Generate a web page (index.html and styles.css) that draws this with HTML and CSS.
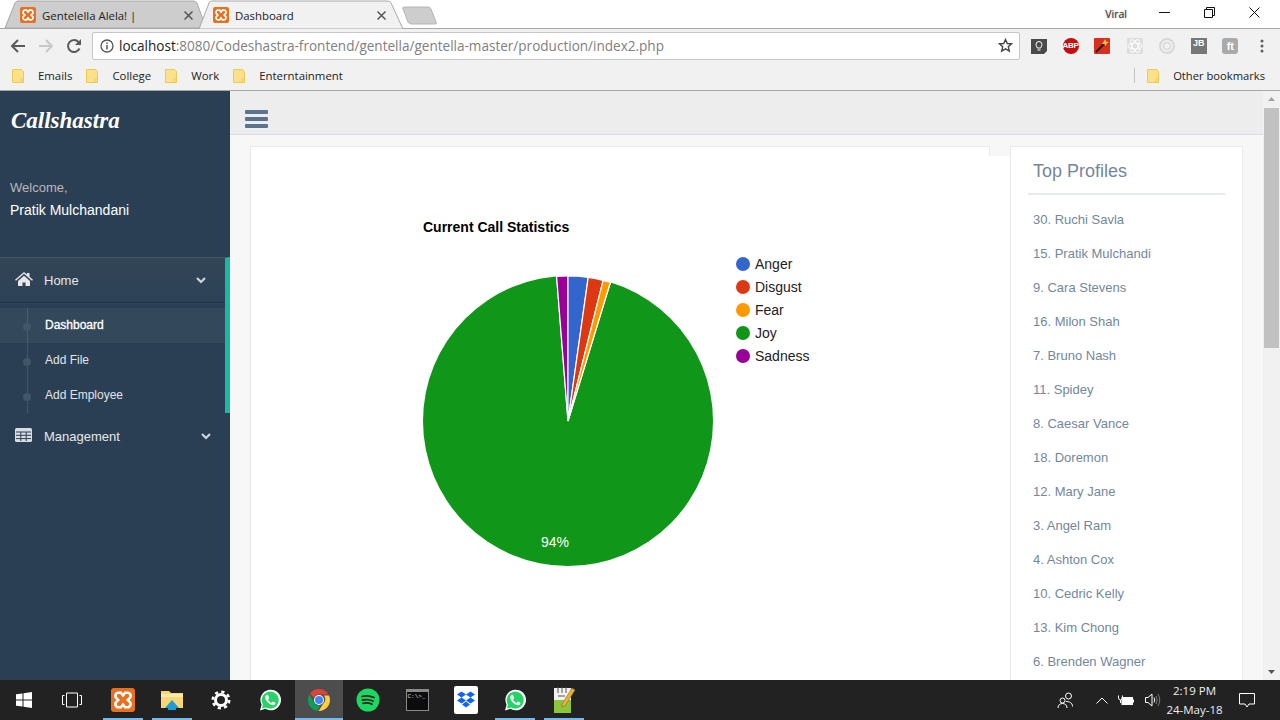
FILE: index.html
```html
<!DOCTYPE html>
<html lang="en">
<head>
    <meta charset="UTF-8">
    <title>Dashboard</title>
    <link rel="stylesheet" href="styles.css">
</head>
<body>
    <svg class="defs" width="0" height="0">
        <symbol id="xampp" viewBox="0 0 16 16">
            <rect width="16" height="16" rx="2" fill="#e8701f"/>
            <path d="M5 3.2h1.6L8 5l1.4-1.8H11a2.1 2.1 0 0 1 1.2 3.8L11.2 8l1 1a2.1 2.1 0 0 1-1.2 3.8H9.4L8 11l-1.4 1.8H5A2.1 2.1 0 0 1 3.8 9l1-1-1-1A2.1 2.1 0 0 1 5 3.2z" fill="none" stroke="#fff" stroke-width="1.7"/>
        </symbol>
        <symbol id="folder" viewBox="0 0 12 14">
            <path d="M.5.5h9l2 2v11H.5z" fill="#fde08a" stroke="#f0c94f"/>
            <rect x="9" y="10" width="2.5" height="3" fill="none" stroke="#f0c94f" stroke-width=".8"/>
        </symbol>
        <symbol id="whatsapp" viewBox="0 0 24 24">
            <path d="M2 22.500l1.600-5.700A10.300 10.300 0 1 1 7.400 20.800z" fill="#fff"/>
            <path d="M4 20.500l1-3.900A8.500 8.500 0 1 1 8 19.500z" fill="#25d366"/>
            <path d="M9 6.800c-.5 0-1.700 1-1.700 2.700 0 3 3.700 7.200 7.400 7.700 1.500.2 2.700-1 2.700-2 0-.5-2-1.600-2.500-1.600-.4 0-.8 1.100-1.300 1.100-1 0-3.400-2.300-3.400-3.300 0-.5.900-.9.900-1.400 0-.4-1-3.200-1.600-3.200z" fill="#fff"/>
        </symbol>
    </svg>

    <div class="window">
        <div class="tabstrip">
            <svg class="tab-shapes" width="440" height="29" viewBox="0 0 440 29">
                <path d="M5 28 15 3q1-2 3-2h175q3 0 4 2l9 25z" fill="#cdcdcd" stroke="#a8a8a8"/>
                <path d="M199 29 209 3q1-2 3-2h175q3 0 4 2l12 26z" fill="#f1f1f1" stroke="#a8a8a8"/>
                <path d="M403 9q-1-2 1-2h24q2 0 3 2l5 13q1 2-1 2h-24q-2 0-3-2z" fill="#cdcdcd" stroke="#b5b5b5"/>
            </svg>
            <div class="tab">
                <svg class="tab-icon" width="16" height="16"><use href="#xampp"/></svg>
                <span class="tab-title">Gentelella Alela! |</span>
                <svg class="tab-close" width="9" height="9" viewBox="0 0 9 9"><path d="M.5.5l8 8M8.500.5l-8 8" stroke="#555" stroke-width="1.500"/></svg>
            </div>
            <div class="tab">
                <svg class="tab-icon" width="16" height="16"><use href="#xampp"/></svg>
                <span class="tab-title">Dashboard</span>
                <svg class="tab-close" width="9" height="9" viewBox="0 0 9 9"><path d="M.5.5l8 8M8.500.5l-8 8" stroke="#555" stroke-width="1.500"/></svg>
            </div>
            <span class="user-name">Viral</span>
            <div class="win-buttons">
                <svg width="11" height="11" viewBox="0 0 11 11"><path d="M0 5.500h11" stroke="#111"/></svg>
                <svg width="11" height="11" viewBox="0 0 11 11"><path d="M.5 2.500h8v8h-8zM2.500 2.500v-2h8v8h-2" fill="none" stroke="#111"/></svg>
                <svg width="11" height="11" viewBox="0 0 11 11"><path d="M.5.500l10 10M10.500.500l-10 10" stroke="#111"/></svg>
            </div>
        </div>

        <div class="toolbar">
            <svg class="nav-icon" width="16" height="16" viewBox="0 0 16 16"><path d="M15 8H2M8 2 2 8l6 6" fill="none" stroke="#5a5a5a" stroke-width="2"/></svg>
            <svg class="nav-icon" width="16" height="16" viewBox="0 0 16 16"><path d="M1 8h13M8 2l6 6-6 6" fill="none" stroke="#c8c8c8" stroke-width="2"/></svg>
            <svg class="nav-icon" width="16" height="16" viewBox="0 0 16 16"><path d="M13.500 10.500A6 6 0 1 1 12.500 4" fill="none" stroke="#5a5a5a" stroke-width="2"/><path d="M15 1v6H9z" fill="#5a5a5a"/></svg>
            <div class="omnibox">
                <svg width="14" height="14" viewBox="0 0 14 14"><circle cx="7" cy="7" r="6" fill="none" stroke="#555" stroke-width="1.300"/><path d="M7 6v4.500M7 3.500v1.500" stroke="#555" stroke-width="1.500"/></svg>
                <span class="url"><span class="url-host">localhost</span>:8080/Codeshastra-frontend/gentella/gentella-master/production/index2.php</span>
                <svg class="star" width="15" height="15" viewBox="0 0 15 15"><path d="M7.500 1.500l1.800 4 4.300.4-3.300 2.900 1 4.300-3.800-2.300-3.800 2.300 1-4.300L1.400 5.900l4.300-.4z" fill="none" stroke="#444" stroke-width="1.400"/></svg>
            </div>
            <div class="extensions">
                <svg width="16" height="16" viewBox="0 0 16 16"><path d="M0 1h16v12l-3 3H0z" fill="#4a4a4a"/><path d="M5 6.500a3 3 0 1 1 6 0c0 1.500-1 2-1.300 3.500H6.300C6 8.500 5 8 5 6.500zM6.500 12h3" fill="none" stroke="#fff"/></svg>
                <span class="ext-abp">ABP</span>
                <svg width="16" height="16" viewBox="0 0 16 16"><rect width="16" height="16" rx="1" fill="#d8301f"/><path d="M2 14l8-8" stroke="#222" stroke-width="2"/><path d="M11 1l1 2.500L15 4l-2.500 1.500L12 8l-1.500-2L8 6l1.500-2z" fill="#f8c53a"/></svg>
                <svg width="18" height="16" viewBox="0 0 18 16"><rect x="1" width="16" height="16" rx="1" fill="#dedede"/><g fill="none" stroke="#fff"><ellipse cx="9" cy="8" rx="7" ry="3"/><ellipse cx="9" cy="8" rx="7" ry="3" transform="rotate(60 9 8)"/><ellipse cx="9" cy="8" rx="7" ry="3" transform="rotate(120 9 8)"/></g></svg>
                <svg width="16" height="16" viewBox="0 0 16 16"><circle cx="8" cy="8" r="7" fill="none" stroke="#d8d8d8" stroke-width="2"/><circle cx="8" cy="8" r="3.500" fill="none" stroke="#d8d8d8" stroke-width="1.500"/></svg>
                <span class="ext-jb">JB</span>
                <span class="ext-ft">ft</span>
                <svg width="16" height="16" viewBox="0 0 16 16"><g fill="#5f5f5f"><rect x="6.500" y="1.500" width="3" height="3" rx="1.500"/><rect x="6.500" y="6.500" width="3" height="3" rx="1.500"/><rect x="6.500" y="11.500" width="3" height="3" rx="1.500"/></g></svg>
            </div>
        </div>

        <div class="bookmarks">
            <div class="bookmark"><svg width="12" height="14"><use href="#folder"/></svg>Emails</div>
            <div class="bookmark"><svg width="12" height="14"><use href="#folder"/></svg>College</div>
            <div class="bookmark"><svg width="12" height="14"><use href="#folder"/></svg>Work</div>
            <div class="bookmark"><svg width="12" height="14"><use href="#folder"/></svg>Enterntainment</div>
            <div class="bookmark bookmark-other"><svg width="12" height="14"><use href="#folder"/></svg>Other bookmarks</div>
        </div>

        <div class="page">
            <aside class="sidebar">
                <div class="logo">Callshastra</div>
                <div class="profile">
                    <span class="welcome">Welcome,</span>
                    <h2 class="profile-name">Pratik Mulchandani</h2>
                </div>
                <div class="menu-group">
                    <div class="menu-item menu-active">
                        <svg class="menu-icon" width="18" height="14" viewBox="0 0 18 14"><path d="M9 0l3 2.600V1h2.500v3.800L18 7.800l-1 1-8-7-8 7-1-1z" fill="#e7e7e7"/><path d="M3 9l6-5.200L15 9v5h-4.500v-3.500h-3V14H3z" fill="#e7e7e7"/></svg>
                        <span>Home</span>
                        <svg class="chevron" width="10" height="7" viewBox="0 0 10 7"><path d="M1 1l4 4 4-4" fill="none" stroke="#d0d5da" stroke-width="2.200"/></svg>
                    </div>
                    <ul class="submenu">
                        <li class="current">Dashboard</li>
                        <li>Add File</li>
                        <li>Add Employee</li>
                    </ul>
                </div>
                <div class="menu-item menu-plain">
                    <svg class="menu-icon" width="18" height="14" viewBox="0 0 18 14"><rect y="0" width="17" height="14" rx="1.500" fill="#d9dde1"/><path d="M1 4h15M1 7.300h15M1 10.600h15M5.800 4v9M11.200 4v9" stroke="#2a3f54" stroke-width="1"/></svg>
                    <span>Management</span>
                    <svg class="chevron" width="10" height="7" viewBox="0 0 10 7"><path d="M1 1l4 4 4-4" fill="none" stroke="#d0d5da" stroke-width="2.200"/></svg>
                </div>
            </aside>

            <div class="content">
                <div class="topnav">
                    <div class="hamburger"><i></i><i></i><i></i></div>
                </div>
                <div class="main">
                    <div class="chart-wrap">
                        <div class="chart-cap"></div>
                        <div class="chart-body">
                            <svg width="759" height="524" viewBox="251 156 759 524">
                                <text x="423" y="232" class="chart-title">Current Call Statistics</text>
                                <circle cx="568" cy="421" r="145" fill="#109618"/>
                                <g stroke="#fff" stroke-width="1.200">
                                    <path d="M568 421 610.400 282.300A145 145 0 0 0 556.600 276.400z" fill="#109618"/>
                                    <path d="M568 421 568 276A145 145 0 0 0 556.600 276.400z" fill="#990099"/>
                                    <path d="M568 421 568 276A145 145 0 0 1 588.200 277.400z" fill="#3366cc"/>
                                    <path d="M568 421 588.200 277.400A145 145 0 0 1 603.100 280.300z" fill="#dc3912"/>
                                    <path d="M568 421 603.100 280.300A145 145 0 0 1 610.400 282.300z" fill="#ff9900"/>
                                </g>
                                <text x="541" y="547" class="slice-label">94%</text>
                                <g class="legend">
                                    <circle cx="743" cy="264" r="7" fill="#3366cc"/><text x="755" y="269">Anger</text>
                                    <circle cx="743" cy="287" r="7" fill="#dc3912"/><text x="755" y="292">Disgust</text>
                                    <circle cx="743" cy="310" r="7" fill="#ff9900"/><text x="755" y="315">Fear</text>
                                    <circle cx="743" cy="333" r="7" fill="#109618"/><text x="755" y="338">Joy</text>
                                    <circle cx="743" cy="356" r="7" fill="#990099"/><text x="755" y="361">Sadness</text>
                                </g>
                            </svg>
                        </div>
                    </div>
                    <div class="profiles">
                        <h2>Top Profiles</h2>
                        <ul>
                            <li>30. Ruchi Savla</li>
                            <li>15. Pratik Mulchandi</li>
                            <li>9. Cara Stevens</li>
                            <li>16. Milon Shah</li>
                            <li>7. Bruno Nash</li>
                            <li>11. Spidey</li>
                            <li>8. Caesar Vance</li>
                            <li>18. Doremon</li>
                            <li>12. Mary Jane</li>
                            <li>3. Angel Ram</li>
                            <li>4. Ashton Cox</li>
                            <li>10. Cedric Kelly</li>
                            <li>13. Kim Chong</li>
                            <li>6. Brenden Wagner</li>
                        </ul>
                    </div>
                </div>
            </div>

            <div class="scrollbar">
                <svg width="17" height="17" viewBox="0 0 17 17"><path d="M5 10l3.500-4 3.500 4z" fill="#a3a3a3"/></svg>
                <div class="scroll-thumb"></div>
                <div class="scroll-track"></div>
                <svg width="17" height="17" viewBox="0 0 17 17"><path d="M5 7l3.500 4L12 7z" fill="#555"/></svg>
            </div>
        </div>

        <div class="taskbar">
            <div class="task-btn">
                <svg width="16" height="16" viewBox="0 0 16 16"><path d="M0 2.300 6.500 1.400V7.500H0zM7.500 1.300 16 0V7.500H7.500zM0 8.500H6.500V14.600L0 13.700zM7.500 8.500H16V16L7.500 14.700z" fill="#fff"/></svg>
            </div>
            <div class="task-btn">
                <svg width="20" height="16" viewBox="0 0 20 16"><path d="M4.500 1h11v14h-11zM2.500 3.500H.5v9h2M17.500 3.500h2v9h-2" fill="none" stroke="#fff"/></svg>
            </div>
            <div class="task-item open"><svg width="24" height="28"><use href="#xampp"/></svg></div>
            <div class="task-item open">
                <svg width="22" height="20" viewBox="0 0 22 20"><path d="M0 1h8l2 2h12v15H0z" fill="#f7d774"/><path d="M0 4h22v3H0z" fill="#fbe9a8"/><path d="M4 18 11 10l7 8h-3v2H7v-2z" fill="#1f9bd8"/></svg>
            </div>
            <div class="task-item">
                <svg width="20" height="20" viewBox="0 0 20 20"><circle cx="10" cy="10" r="5.500" fill="none" stroke="#fff" stroke-width="3"/><circle cx="10" cy="10" r="8.200" fill="none" stroke="#fff" stroke-width="2.600" stroke-dasharray="3.200 3.240"/></svg>
            </div>
            <div class="task-item"><svg width="24" height="24"><use href="#whatsapp"/></svg></div>
            <div class="task-item open active">
                <svg width="24" height="24" viewBox="0 0 24 24">
                    <path d="M12 1a11 11 0 0 1 9.500 5.500H12a5.500 5.500 0 0 0-5.200 3.600L3.200 5.400A11 11 0 0 1 12 1z" fill="#db4437"/>
                    <path d="M22 7.500A11 11 0 0 1 11.500 23l4.800-7.500A5.500 5.500 0 0 0 16.800 7.500z" fill="#ffcd40"/>
                    <path d="M2.500 6.500l4.700 8a5.500 5.500 0 0 0 6 2.800L10.500 23A11 11 0 0 1 2.500 6.500z" fill="#0f9d58"/>
                    <circle cx="12" cy="12" r="5" fill="#fff"/><circle cx="12" cy="12" r="4" fill="#4285f4"/>
                </svg>
            </div>
            <div class="task-item">
                <svg width="24" height="24" viewBox="0 0 24 24"><circle cx="12" cy="12" r="11.500" fill="#1ed760"/><path d="M6 8.500q6-1.800 12 1M6.500 12q5.500-1.300 10.500 1M7 15.300q4.500-1 9 .8" fill="none" stroke="#1a2a1f" stroke-width="1.800" stroke-linecap="round"/></svg>
            </div>
            <div class="task-item">
                <div class="cmd-icon">C:\&gt;_</div>
            </div>
            <div class="task-item">
                <svg width="24" height="28" viewBox="0 0 24 28"><rect width="24" height="28" rx="2" fill="#fff"/><path d="M7.500 5.500 12 8.500 7.500 11.500 3 8.500zM16.500 5.500 21 8.500 16.500 11.500 12 8.500zM7.500 11.500 12 14.500 7.500 17.500 3 14.500zM16.500 11.500 21 14.500 16.500 17.500 12 14.500zM12 15.500 16 18.500 12 21.500 8 18.500z" fill="#0f62fe"/></svg>
            </div>
            <div class="task-item open"><svg width="24" height="24"><use href="#whatsapp"/></svg></div>
            <div class="task-item open">
                <svg width="24" height="28" viewBox="0 0 24 28"><path d="M2 2h17v25H2z" fill="#f2f2f2"/><path d="M2 14h17v13H2z" fill="#8cc63f"/><path d="M6 1v6M10 1v6M14 1v6" stroke="#555"/><path d="M6 10h7" stroke="#555"/><path d="M10 18 20 2l3 2-10 16-3 1z" fill="#e8b23a" stroke="#8a6a1e" stroke-width=".6"/></svg>
            </div>
            <div class="tray">
                <svg width="18" height="18" viewBox="0 0 18 18"><circle cx="11.500" cy="5" r="3" fill="none" stroke="#fff"/><circle cx="5.500" cy="9.500" r="2.500" fill="none" stroke="#fff"/><path d="M1 17c0-3 2-4.500 4.500-4.500S10 14 10 17M9 10.500c3 0 6.500 1 6.500 5" fill="none" stroke="#fff"/></svg>
                <svg class="tray-caret" width="12" height="7" viewBox="0 0 12 7"><path d="M.5 6.500 6 1l5.500 5.500" fill="none" stroke="#fff"/></svg>
                <svg class="tray-battery" width="16" height="12" viewBox="0 0 16 12"><path d="M.5 1.500V4a2 2 0 0 0 4 0V1.500M2.500 6v3" fill="none" stroke="#fff"/><rect x="4" y="3.500" width="10.500" height="7" fill="#fff" stroke="#fff"/><path d="M15.500 5.500v3" stroke="#fff"/></svg>
                <svg class="tray-volume" width="16" height="14" viewBox="0 0 16 14"><path d="M.5 4.500h2.500L7 1v12L3 9.500H.5z" fill="none" stroke="#fff"/><path d="M9 4.500q1.500 2.500 0 5" fill="none" stroke="#fff"/><path d="M11 3q2.500 4 0 8M13 1q3.500 6 0 12" fill="none" stroke="#777"/></svg>
                <div class="clock"><span>2:19 PM</span><span>24-May-18</span></div>
                <svg class="tray-note" width="16" height="15" viewBox="0 0 16 15"><path d="M.5.500h15v10.500h-5.500l-2 3-2-3H.5z" fill="none" stroke="#fff"/></svg>
            </div>
        </div>
    </div>
</body>
</html>
```

FILE: styles.css
```css
* {
    box-sizing: border-box;
}
body {
    margin: 0;
    overflow: hidden;
    font-family: "Liberation Sans", Arial, sans-serif;
    color: #222;
}
ul {
    list-style: none;
    margin: 0;
    padding: 0;
}
.defs {
    display: block;
    height: 0;
}
.window {
    height: 720px;
    display: flex;
    flex-direction: column;
}

/* browser chrome */
.tabstrip {
    height: 28px;
    background: #fff;
    position: relative;
    display: flex;
    padding-left: 20px;
    font-family: "Open Sans", sans-serif;
    font-size: 11.400px;
}
.tab-shapes {
    position: absolute;
    top: 0;
    left: 0;
}
.tab {
    position: relative;
    width: 193px;
    height: 28px;
    display: flex;
    align-items: center;
    padding-right: 20px;
    padding-top: 2px;
}
.tab-title {
    flex: 1;
    margin-left: 6px;
}
.user-name {
    margin-left: auto;
    margin-right: 14px;
    line-height: 28px;
    font-size: 10.500px;
    color: #333;
    text-shadow: 0 0 2px #999;
}
.win-buttons {
    width: 139px;
    display: flex;
    align-items: center;
    justify-content: space-between;
    padding: 0 20px 3px 18px;
}
.toolbar {
    height: 34px;
    background: #f1f1f1;
    display: flex;
    align-items: center;
    padding-left: 10px;
    border-top: 1px solid #a8a8a8;
    font-family: "Open Sans", sans-serif;
}
.nav-icon {
    margin-right: 12px;
}
.nav-icon:nth-child(3) {
    margin-right: 10px;
}
.omnibox {
    width: 928px;
    height: 28px;
    background: #fff;
    border: 1px solid #c6c6c6;
    border-radius: 2px;
    display: flex;
    align-items: center;
    padding-left: 7px;
    padding-right: 6px;
}
.url {
    margin-left: 5px;
    font-size: 13.550px;
    color: #808080;
    flex: 1;
}
.url-host {
    color: #222;
}
.extensions {
    flex: 1;
    display: flex;
    align-items: center;
    justify-content: space-between;
    padding: 0 10px 0 11px;
}
.extensions > span {
    width: 16px;
    height: 16px;
    color: #fff;
    display: flex;
    align-items: center;
    justify-content: center;
    font-family: "Liberation Sans", sans-serif;
    font-weight: bold;
}
.ext-abp {
    background: #c70d0d;
    border-radius: 50%;
    font-size: 8px;
    letter-spacing: -0.3px;
}
.ext-jb {
    background: #777;
    font-size: 9px;
    align-items: flex-start !important;
}
.ext-ft {
    background: #aaa;
    border-radius: 3px;
    font-size: 11px;
}
.bookmarks {
    height: 29px;
    background: #f1f1f1;
    border-bottom: 1px solid #a8a8a8;
    display: flex;
    align-items: center;
    padding: 0 0 1px 12px;
    font-family: "Open Sans", sans-serif;
    font-size: 11.400px;
    color: #222;
}
.bookmark {
    display: flex;
    align-items: center;
    gap: 14px;
    margin-right: 14px;
}
.bookmark-other {
    margin-left: auto;
    margin-right: 15px;
    padding-left: 12px;
    border-left: 1px solid #c4c4c4;
    font-size: 11.200px;
}

/* page */
.page {
    flex: 1;
    display: flex;
    min-height: 0;
}
.sidebar {
    width: 230px;
    background: #2a3f54;
    color: #fff;
}
.logo {
    height: 60px;
    padding: 15px 0 0 11px;
    font-family: "Liberation Serif", serif;
    font-style: italic;
    font-weight: bold;
    font-size: 23px;
    line-height: 30px;
}
.profile {
    height: 106px;
    padding: 29px 10px 0;
}
.welcome {
    display: block;
    font-size: 13px;
    line-height: 15px;
    color: #bab8b8;
}
.profile-name {
    margin: 7px 0 0;
    font-size: 14px;
    font-weight: normal;
    line-height: 16px;
}
.menu-group {
    border-top: 1px solid #425668;
    border-right: 5px solid #1abb9c;
}
.menu-item {
    display: flex;
    align-items: center;
    font-size: 13px;
    color: #e7e7e7;
    padding-left: 15px;
}
.menu-item span {
    margin-left: 11px;
    flex: 1;
}
.menu-icon {
    margin-top: -3px;
}
.menu-active {
    height: 45px;
    padding-right: 19px;
    background: linear-gradient(#334556, #2c4257);
    border-bottom: 1px solid #1f3144;
    box-shadow: 0 1px 0 #2f4459;
}
.menu-plain {
    height: 46px;
    padding-right: 19px;
}
.submenu {
    margin-top: 5px;
    color: #e1e4e7;
    font-size: 12px;
    background: linear-gradient(#425668, #425668) 27px 0 / 1px 100% no-repeat;
}
.submenu li {
    height: 35px;
    line-height: 35px;
    padding-left: 45px;
    position: relative;
}
.submenu li::before {
    content: "";
    position: absolute;
    left: 23px;
    top: 15px;
    width: 8px;
    height: 8px;
    border-radius: 50%;
    background: #425668;
}
.submenu .current {
    background: rgba(255, 255, 255, 0.05);
    color: #fff;
    -webkit-text-stroke: 0.3px #fff;
}
.content {
    flex: 1;
    min-width: 0;
    background: #f7f7f7;
    display: flex;
    flex-direction: column;
}
.topnav {
    height: 44px;
    background: #ededed;
    border-bottom: 1px solid #d9dee4;
    padding: 19px 0 0 15px;
}
.hamburger {
    width: 23px;
    display: flex;
    flex-direction: column;
    gap: 3px;
}
.hamburger i {
    height: 4px;
    border-radius: 1px;
    background: #5a738e;
}
.main {
    flex: 1;
    min-height: 0;
    display: flex;
    padding: 11px 0 0 20px;
}
.chart-wrap {
    width: 760px;
    display: flex;
    flex-direction: column;
}
.chart-cap {
    width: 740px;
    height: 10px;
    background: #fff;
    border: 1px solid #e6e9ed;
    border-bottom: 0;
}
.chart-body {
    flex: 1;
    background: #fff;
    border-left: 1px solid #e6e9ed;
    overflow: hidden;
}
.chart-body svg {
    display: block;
}
.chart-title {
    font-size: 14px;
    font-weight: bold;
    fill: #000;
}
.slice-label {
    font-size: 14px;
    fill: #fff;
}
.legend text {
    font-size: 14px;
    fill: #222;
}
.profiles {
    width: 233px;
    background: #fff;
    border: 1px solid #e6e9ed;
    border-bottom: 0;
    padding: 0 17px;
    overflow: hidden;
    color: #73879c;
}
.profiles h2 {
    margin: 0;
    height: 48px;
    padding: 12px 0 0 5px;
    font-size: 18px;
    line-height: 24px;
    font-weight: normal;
    border-bottom: 2px solid #e6e9ed;
}
.profiles ul {
    padding: 8px 0 0 5px;
    font-size: 13px;
}
.profiles li {
    height: 34px;
    line-height: 34px;
}
.scrollbar {
    width: 17px;
    background: #f1f1f1;
    display: flex;
    flex-direction: column;
    flex-shrink: 0;
}
.scroll-thumb {
    height: 240px;
    margin: 0 1px;
    background: #c1c1c1;
}
.scroll-track {
    flex: 1;
}

/* windows taskbar */
.taskbar {
    height: 40px;
    background: #222;
    display: flex;
    color: #eee;
    font-family: "Open Sans", sans-serif;
}
.task-btn {
    width: 48px;
    display: flex;
    align-items: center;
    justify-content: center;
}
.task-btn:nth-child(2) {
    margin-right: 3px;
    width: 48px;
}
.task-item {
    width: 48px;
    margin-right: 1px;
    display: flex;
    align-items: center;
    justify-content: center;
    position: relative;
}
.task-item.open::after {
    content: "";
    position: absolute;
    left: 4px;
    right: 4px;
    bottom: 0;
    height: 2px;
    background: #76b9ed;
}
.task-item.active {
    background: #4d4d4d;
}
.task-item.active::after {
    left: 0;
    right: 0;
}
.cmd-icon {
    width: 23px;
    height: 22px;
    background: #0c0c0c;
    border: 1px solid #8a8a8a;
    border-top-width: 3px;
    color: #ddd;
    font-family: "Liberation Mono", monospace;
    font-size: 6px;
    line-height: 9px;
    padding-left: 1px;
}
.tray {
    margin-left: auto;
    display: flex;
    align-items: center;
    padding-right: 25px;
}
.tray-caret {
    margin-left: 21px;
}
.tray-battery {
    margin-left: 10px;
}
.tray-volume {
    margin-left: 11px;
}
.clock {
    width: 57px;
    margin-left: 5px;
    display: flex;
    flex-direction: column;
    align-items: center;
    font-size: 11.500px;
    line-height: 19px;
    white-space: nowrap;
}
.tray-note {
    margin-left: 16px;
}
```
